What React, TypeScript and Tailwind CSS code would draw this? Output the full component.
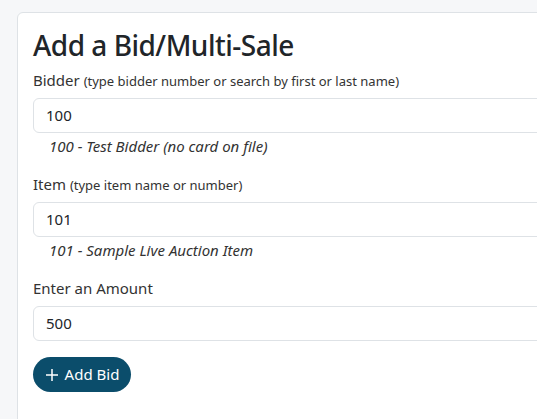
import React from "react";

function Field({ value }: { value: string }) {
  return (
    <div className="h-[35px] w-full rounded-md border border-[#dee2e6] bg-white px-3 flex items-center text-[15px] text-[#212529]">
      {value}
    </div>
  );
}

export default function App() {
  return (
    <div
      className="h-[419px] bg-[#f6f7f9] pt-3 pl-[17px] overflow-hidden"
      style={{ fontFamily: '"Noto Sans", "Open Sans", sans-serif' }}
    >
      <div className="w-[620px] h-[500px] rounded-md border border-[#dee2e6] bg-white px-[15px] pt-[15px]">
        <h2 className="h-[34px] text-[28px] leading-[34px] font-medium tracking-[-0.5px] text-[#212529] mb-[6px]">
          Add a Bid/Multi-Sale
        </h2>
        <div className="h-[24px] text-[15px] leading-[24px] text-[#333] mb-[6px]">
          Bidder <span className="text-[13px] leading-[24px]">(type bidder number or search by first or last name)</span>
        </div>
        <Field value="100" />
        <div className="h-[24px] italic text-[15px] leading-[24px] text-[#333] pl-4 mt-[1px] mb-[14px]">
          100 - Test Bidder (no card on file)
        </div>
        <div className="h-[24px] text-[15px] leading-[24px] text-[#333] mb-[6px]">
          Item <span className="text-[13px] leading-[24px]">(type item name or number)</span>
        </div>
        <Field value="101" />
        <div className="h-[24px] italic text-[15px] leading-[24px] text-[#333] pl-4 mt-[1px] mb-[14px]">
          101 - Sample Live Auction Item
        </div>
        <div className="h-[24px] text-[15px] leading-[24px] text-[#333] mb-[6px]">Enter an Amount</div>
        <Field value="500" />
        <button className="mt-4 h-[35px] w-[98px] rounded-full bg-[#0b4d6b] text-white text-[15px] flex items-center justify-center gap-[6px]">
          <svg width="14" height="14" viewBox="0 0 14 14" fill="none" stroke="white" strokeWidth="1.5">
            <path d="M7 1v12M1 7h12" />
          </svg>
          Add Bid
        </button>
      </div>
    </div>
  );
}
